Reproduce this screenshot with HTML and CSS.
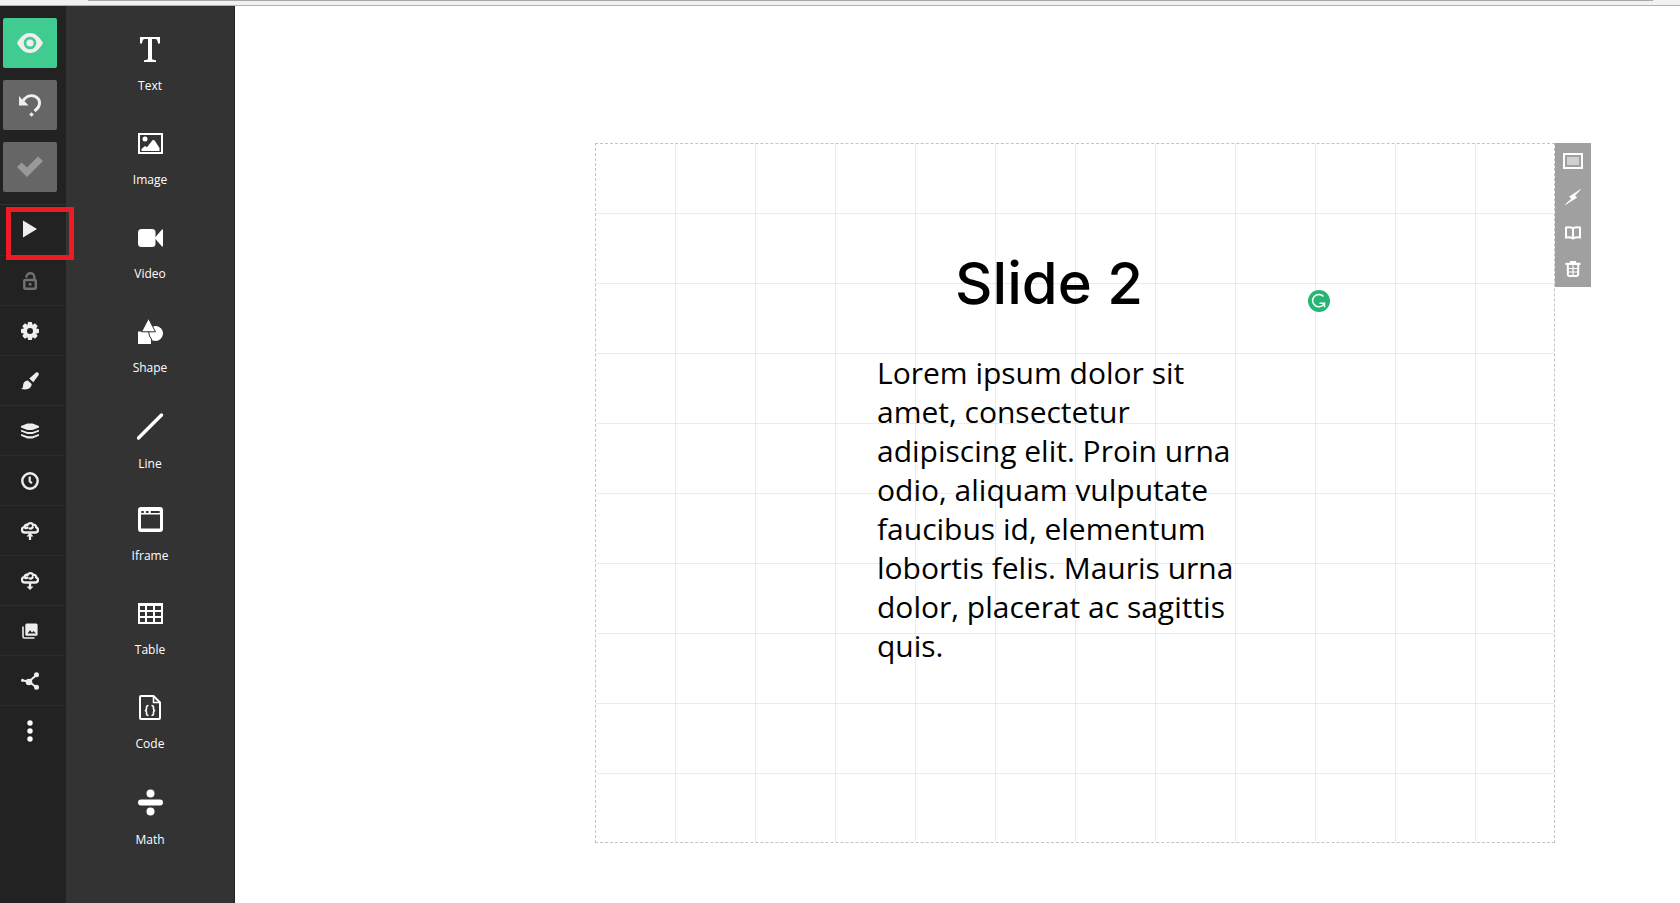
FILE: index.html
```html
<!DOCTYPE html>
<html lang="en">
<head>
<meta charset="utf-8">
<title>Slide editor</title>
<link rel="stylesheet" href="styles.css">
</head>
<body>
<header class="topbar"><div class="topbar-edge"></div></header>
<div class="editor">
  <nav class="rail" aria-label="Deck tools">
    <div class="rail-main">
      <button class="main-btn preview" aria-label="Preview"><svg width="26" height="20" viewBox="0 0 26 20"><path fill="#eee" fill-rule="evenodd" d="M0 10C4 3 8 0 13 0s9 3 13 10c-4 7-8 10-13 10S4 17 0 10zM13 3.700a6.300 6.300 0 1 0 0 12.600a6.300 6.300 0 1 0 0-12.600z"/><circle cx="13" cy="10" r="3.600" fill="#eee"/></svg></button>
      <button class="main-btn" aria-label="Undo"><svg width="24" height="24" viewBox="0 0 24 24"><path d="M4 9.500C7 4 12 1.500 16.500 3.200C23 6 23.500 13 16.500 18" fill="none" stroke="#eee" stroke-width="3"/><path d="M1 3v9.500h9.500l-3-3.200-3-2.300z" fill="#eee"/><path d="M13.500 19.200l2.300 2.300-2.300 2.300-2.300-2.300z" fill="#eee"/></svg></button>
      <button class="main-btn" aria-label="Saved"><svg width="26" height="22" viewBox="0 0 26 22"><path d="M0 11l4.500-4.500 5.500 5L21 0.500l5 4.500L10 21z" fill="#999"/></svg></button>
    </div>
    <div class="rail-list">
      <button class="rail-btn" aria-label="Present"><svg width="14" height="18" viewBox="0 0 14 18"><path d="M0 0.500L14 9 0 17.500z" fill="#eee"/></svg><span class="highlight"></span></button>
      <button class="rail-btn" aria-label="Privacy"><svg width="14" height="18" viewBox="0 0 14 18"><g fill="none" stroke="#707070" stroke-width="2.500"><path d="M3.500 5.500V5a3.700 3.500 0 0 1 7.800 0V8"/><rect x="1.300" y="8" width="11.500" height="8.700" rx="1"/></g><rect x="5.800" y="11" width="2.600" height="2.600" fill="#707070"/></svg></button>
      <button class="rail-btn" aria-label="Settings"><svg width="18" height="18" viewBox="0 0 18 18"><g fill="#eee"><g id="teeth"><rect x="6.800" y="0" width="4.400" height="3.500" rx="1"/><rect x="6.800" y="14.500" width="4.400" height="3.500" rx="1"/><rect x="0" y="6.800" width="3.500" height="4.400" rx="1"/><rect x="14.500" y="6.800" width="3.500" height="4.400" rx="1"/></g><use href="#teeth" transform="rotate(45 9 9)"/></g><circle cx="9" cy="9" r="5" fill="none" stroke="#eee" stroke-width="4"/></svg></button>
      <button class="rail-btn" aria-label="Style"><svg width="18" height="18" viewBox="0 0 18 18"><path fill="#eee" d="M15 .6c1.800-1 3.600.9 2.500 2.700L12.300 10.300 8.300 6.600zM6.900 8.500l3.800 3.600c-.2 4-3.700 6.500-10.700 4.900 3-1 1.300-3.700 3-6.500.9-1.300 2.300-2 3.900-2z"/></svg></button>
      <button class="rail-btn" aria-label="Arrange"><svg width="18" height="16" viewBox="0 0 18 16"><g fill="#eee"><path d="M0 3L6.500.5h5L18 3v1.500L11.500 7h-5L0 4.500z"/><path d="M0 6.700l6.500 2.200h5L18 6.700v1.700l-6.500 2.600h-5L0 8.400z"/><path d="M0 11l6.500 2.200h5L18 11v1.700l-6.500 2.700h-5L0 12.700z"/></g></svg></button>
      <button class="rail-btn" aria-label="Revision history"><svg width="18" height="18" viewBox="0 0 18 18"><circle cx="9" cy="9" r="7.700" fill="none" stroke="#eee" stroke-width="2.400"/><path d="M8.700 4.500v4.800l2.200 2" fill="none" stroke="#eee" stroke-width="2.200"/></svg></button>
      <button class="rail-btn" aria-label="Import"><svg width="18" height="18" viewBox="0 0 18 18"><g fill="none" stroke="#eee" stroke-width="2.300"><path d="M4 10.500C.3 10.500-.2 5.800 3.300 5 4 2.300 6 2.700 6.500 3c1-2.600 5-2.300 5.500.1 2-.7 3.300.5 3.200 2.200 2.700 1 2.300 5.200-1 5.200zM4 7q1.500-2.500 3-.4M8 6q2.500 1.700 4-1.500"/><path d="M9 12v6"/></g><path d="M9 10.500l3.500 4h-7z" fill="#eee"/></svg></button>
      <button class="rail-btn" aria-label="Export"><svg width="18" height="18" viewBox="0 0 18 18"><g fill="none" stroke="#eee" stroke-width="2.300"><path d="M4 10.500C.3 10.500-.2 5.800 3.300 5 4 2.300 6 2.700 6.500 3c1-2.600 5-2.300 5.500.1 2-.7 3.300.5 3.200 2.200 2.700 1 2.300 5.200-1 5.200zM4 7q1.500-2.500 3-.4M8 6q2.500 1.700 4-1.500"/><path d="M9 10v5"/></g><path d="M9 18l3.500-3.500h-7z" fill="#eee"/></svg></button>
      <button class="rail-btn" aria-label="Media library"><svg width="16" height="16" viewBox="0 0 16 16"><path d="M1 3.500V13.500Q1 15 2.500 15H12.500" fill="none" stroke="#eee" stroke-width="1.600"/><rect x="3.300" y="0.500" width="12.300" height="12.300" rx="1.500" fill="#eee"/><path d="M5.500 10.500L8 7.300l2 2.300 1.500-1.700 2.500 2.600z" fill="#222"/></svg></button>
      <button class="rail-btn" aria-label="Share"><svg width="18" height="18" viewBox="0 0 18 18"><path d="M1.500 8.500L8 9.500 15.500 3M8 9.500l7.500 6" stroke="#eee" stroke-width="2" fill="none"/><g fill="#eee"><circle cx="1.500" cy="8.300" r="1.500"/><circle cx="8" cy="10" r="3.300"/><circle cx="15.500" cy="2.800" r="2.500"/><circle cx="15.500" cy="15.300" r="2.500"/></g></svg></button>
      <button class="rail-btn" aria-label="More"><svg width="6" height="22" viewBox="0 0 6 22"><g fill="#fff"><circle cx="3" cy="3" r="2.700"/><circle cx="3" cy="11" r="2.700"/><circle cx="3" cy="19" r="2.700"/></g></svg></button>
    </div>
  </nav>
  <aside class="palette" aria-label="Add element">
    <button class="tool"><span class="tool-icon"><svg width="21" height="25" viewBox="0 0 21 25"><path fill="#fff" d="M0 0h20v6.500h-2Q17.500 2 15.500 2H12v19.500q0 1.500 4 1.700V25H4v-1.800q4-.2 4-1.700V2H4.500Q2.500 2 2 6.500H0z"/></svg></span>Text</button>
    <button class="tool"><span class="tool-icon"><svg width="25" height="21" viewBox="0 0 25 21"><rect x="1" y="1" width="23" height="19" fill="none" stroke="#fff" stroke-width="2"/><circle cx="7" cy="6" r="2.500" fill="#fff"/><path d="M3.500 18v-2l3.500-3 2 1.300 5.500-7q1.500-1 2.500.7L21.500 15v3z" fill="#fff"/></svg></span>Image</button>
    <button class="tool"><span class="tool-icon"><svg width="25" height="18" viewBox="0 0 25 18"><rect width="17.500" height="18" rx="3.500" fill="#fff"/><path d="M17 8.500L24 .5h1v17h-1l-7-8z" fill="#fff"/></svg></span>Video</button>
    <button class="tool"><span class="tool-icon"><svg width="25" height="25" viewBox="0 0 25 25"><circle cx="17.500" cy="14.500" r="7.500" fill="#fff"/><path d="M-.5 12h11q.5 6 3 8v5.500H-.5z" fill="#fff" stroke="#333" stroke-width="1"/><path d="M10.500-.5L17.500 12.800H3.500z" fill="#fff" stroke="#333" stroke-width="1"/></svg></span>Shape</button>
    <button class="tool"><span class="tool-icon tall"><svg width="27" height="27" viewBox="0 0 27 27"><path d="M1.500 25L24.500 2" stroke="#fff" stroke-width="3.300" stroke-linecap="round"/></svg></span>Line</button>
    <button class="tool"><span class="tool-icon"><svg width="25" height="25" viewBox="0 0 25 25"><path fill="#fff" fill-rule="evenodd" d="M3 0h19a3 3 0 0 1 3 3v19a3 3 0 0 1-3 3H3a3 3 0 0 1-3-3V3a3 3 0 0 1 3-3zM3 7.500V21.500h19V7.500zM3.300 4v2h2.500V4zM8 4v2h2.500V4zM12.700 4v2h9V4z"/></svg></span>Iframe</button>
    <button class="tool"><span class="tool-icon"><svg width="25" height="21" viewBox="0 0 25 21"><path fill="#fff" fill-rule="evenodd" d="M0 0h25v21H0zM2 3v4h5V3zM9 3v4h6V3zM17 3v4h6V3zM2 9v4h5V9zM9 9v4h6V9zM17 9v4h6V9zM2 15v4h5v-4zM9 15v4h6v-4zM17 15v4h6v-4z"/></svg></span>Table</button>
    <button class="tool"><span class="tool-icon"><svg width="23" height="25" viewBox="0 0 23 25"><g fill="none" stroke="#fff"><path stroke-width="2" d="M14.500 1H2Q1 1 1 2v21q0 1 1 1h18q1 0 1-1V7.500z"/><path stroke-width="1.600" d="M14.500 1v6.500H21M9.500 10.500q-2 0-2 2v1.500q0 1.500-1.700 1.500 1.700 0 1.700 1.500v1.500q0 2 2 2M12.500 10.500q2 0 2 2v1.500q0 1.500 1.700 1.500-1.700 0-1.700 1.500v1.500q0 2-2 2"/></g></svg></span>Code</button>
    <button class="tool"><span class="tool-icon tall"><svg width="25" height="27" viewBox="0 0 25 27"><g fill="#fff"><circle cx="12.500" cy="4.500" r="4"/><rect y="10.500" width="25" height="6" rx="3"/><circle cx="12.500" cy="22.500" r="4"/></g></svg></span>Math</button>
  </aside>
  <main class="stage">
    <section class="slide">
      <h1 class="slide-title">Slide 2</h1>
      <p class="slide-text">Lorem ipsum dolor sit amet, consectetur adipiscing elit. Proin urna odio, aliquam vulputate faucibus id, elementum lobortis felis. Mauris urna dolor, placerat ac sagittis quis.</p>
      <svg class="grammar-badge" width="22" height="22" viewBox="0 0 22 22"><circle cx="11" cy="11" r="11" fill="#27b573"/><path d="M15.500 6.500A6.200 6.200 0 1 0 16.300 13.500M11.500 13.200h5v4" fill="none" stroke="#fff" stroke-width="1.500"/></svg>
    </section>
    <div class="slide-tools">
      <button class="slide-btn" aria-label="Background"><svg width="20" height="16" viewBox="0 0 20 16"><rect x="1" y="1" width="18" height="14" fill="none" stroke="#fff" stroke-width="2"/><rect x="4" y="4" width="12" height="8" fill="#d0d0d0"/></svg></button>
      <button class="slide-btn" aria-label="Transition"><svg width="16" height="16" viewBox="0 0 16 16"><path d="M15.500.5L9.700 6.800l2 1.800L.5 15.500 6.700 9.700 4.500 7.800z" fill="#fff" stroke="#fff" stroke-width=".7"/></svg></button>
      <button class="slide-btn" aria-label="Notes"><svg width="16" height="14" viewBox="0 0 16 14"><path d="M1 1.500Q5 .7 8 2.200 11 .7 15 1.500v10Q11 10.800 8 12.500 5 10.800 1 11.500zM8 2v10.500" fill="none" stroke="#fff" stroke-width="2"/></svg></button>
      <button class="slide-btn" aria-label="Delete"><svg width="16" height="16" viewBox="0 0 16 16"><path d="M.5 2.800h15M5 1.200h6" stroke="#fff" stroke-width="2.200"/><path d="M2.800 3v10q0 1.900 2 1.900h6.400q2 0 2-1.900V3" fill="none" stroke="#fff" stroke-width="2"/><path d="M8 4.500V14M3 7.500h10M3 11h10" stroke="#fff" stroke-width="1.200"/></svg></button>
    </div>
  </main>
</div>
</body>
</html>
```
FILE: styles.css
```css
* { box-sizing: border-box; }
body {
  margin: 0;
  min-height: 100vh;
  display: flex;
  flex-direction: column;
  background: #fff;
  font-family: "Open Sans", sans-serif;
}
button {
  border: 0;
  padding: 0;
  background: none;
  color: inherit;
  font: inherit;
  cursor: pointer;
}
svg { display: block; }
.topbar {
  height: 6px;
  padding: 0 27px 0 88px;
  background: #f2f1f2;
  border-bottom: 1px solid #b0b0b0;
}
.topbar-edge { height: 1px; background: #a8a8a8; }
.editor { flex: 1; display: flex; }

.rail { width: 66px; flex: none; background: #222; }
.rail-main {
  display: flex;
  flex-direction: column;
  gap: 12px;
  padding: 12px 9px 12px 3px;
}
.main-btn {
  height: 50px;
  display: grid;
  place-items: center;
  background: #666;
  border-radius: 2px;
}
.main-btn.preview { background: #40cc90; }
.rail-list { margin-right: 1px; border-top: 1px solid #323232; }
.rail-btn {
  position: relative;
  width: 100%;
  height: 50px;
  padding-right: 5px;
  display: grid;
  place-items: center;
  border-bottom: 1px solid #2c2c2c;
}
.rail-btn:first-child { height: 51px; padding-bottom: 2px; }
.rail-btn:last-child { border-bottom: 0; }
.highlight {
  position: absolute;
  z-index: 1;
  left: 6px;
  top: 2px;
  width: 68px;
  height: 53px;
  border: 5px solid #ed1c24;
}

.palette {
  width: 169px;
  flex: none;
  display: flex;
  flex-direction: column;
  padding-top: 31px;
  background: #333;
  border-right: 1px solid #222;
  color: #fff;
  font-size: 12px;
  line-height: 16px;
}
.tool {
  height: 94px;
  display: flex;
  flex-direction: column;
  align-items: center;
}
.tool-icon {
  height: 25px;
  margin: 0 0 16px 1px;
  display: grid;
  place-items: center;
}
.tool-icon.tall { height: 27px; }

.stage {
  flex: 1;
  display: flex;
  align-items: flex-start;
  padding: 137px 89px 0 360px;
}
.slide {
  position: relative;
  flex: 1;
  height: 700px;
  border: 1px dashed #c4c4c4;
  background-image:
    linear-gradient(to right, rgba(0, 0, 0, 0.08) 1px, transparent 1px),
    linear-gradient(to bottom, rgba(0, 0, 0, 0.08) 1px, transparent 1px);
  background-size: 80px 70px;
  background-origin: border-box;
  background-clip: padding-box;
}
.slide-title {
  position: absolute;
  left: 280px;
  top: 103px;
  width: 346px;
  margin: 0;
  text-align: center;
  font: 500 58px/72px Inter, sans-serif;
  color: #000;
}
.slide-text {
  position: absolute;
  left: 281px;
  top: 209px;
  width: 368px;
  margin: 0;
  font-size: 30px;
  line-height: 39px;
  color: #000;
}
.grammar-badge { position: absolute; left: 712px; top: 146px; }
.slide-tools {
  width: 36px;
  flex: none;
  background: #a0a0a0;
}
.slide-btn {
  width: 100%;
  height: 36px;
  display: grid;
  place-items: center;
}
```
